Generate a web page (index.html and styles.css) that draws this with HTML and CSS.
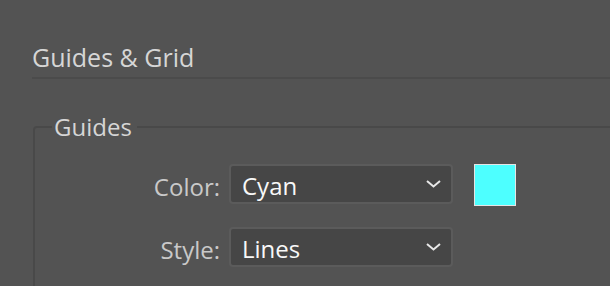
FILE: index.html
```html
<!DOCTYPE html>
<html lang="en">
<head>
  <meta charset="UTF-8" />
  <title>Preferences - Guides &amp; Grid</title>
  <link rel="stylesheet" href="styles.css">
</head>
<body>
  <div class="panel">
    <!-- Section header -->
    <h1 class="panel-title">Guides &amp; Grid</h1>

    <!-- Guides group -->
    <fieldset class="group">
      <legend>Guides</legend>
      <div class="form-grid">
        <label class="field-label">Color:</label>
        <div class="select">
          <span>Cyan</span>
          <svg class="chevron" width="15" height="8" viewBox="0 0 15 8"><path d="M1 1 L7.5 6.5 L14 1" fill="none" stroke="#e8e8e8" stroke-width="2"/></svg>
        </div>
        <div class="swatch"></div>

        <label class="field-label">Style:</label>
        <div class="select">
          <span>Lines</span>
          <svg class="chevron" width="15" height="8" viewBox="0 0 15 8"><path d="M1 1 L7.5 6.5 L14 1" fill="none" stroke="#e8e8e8" stroke-width="2"/></svg>
        </div>
      </div>
    </fieldset>
  </div>
</body>
</html>
```
FILE: styles.css
```css
* {
  box-sizing: border-box;
  margin: 0;
  padding: 0;
}
body {
  font-family: "Open Sans", "Noto Sans", sans-serif;
  background-color: #535353;
  color: #d4d4d4;
  overflow: hidden;
}
.panel {
  padding: 42px 0 0 32px;
  width: 640px;
}
.panel-title {
  font-size: 25px;
  font-weight: 500;
  line-height: 30px;
  padding-bottom: 5px;
  border-bottom: 2px solid #4b4b4b;
  color: #d6d6d6;
}
.group {
  margin: 33px 0 0 1px;
  border: 2px solid #494949;
  border-radius: 4px;
  padding: 0 0 20px 17px;
}
.group legend {
  font-size: 24px;
  font-weight: 500;
  line-height: 30px;
  padding: 0 5px 0 2px;
  color: #d6d6d6;
}
.form-grid {
  display: grid;
  grid-template-columns: 168px 224px 42px;
  column-gap: 9px;
  row-gap: 20px;
  align-items: start;
  padding-top: 22px;
}
.field-label {
  text-align: right;
  font-size: 24px;
  font-weight: 500;
  line-height: 40px;
  padding-top: 3px;
  color: #c9c9c9;
}
.select {
  height: 40px;
  background: #464646;
  border: 2px solid #5b5b5b;
  border-radius: 4px;
  display: flex;
  align-items: center;
  justify-content: space-between;
  padding: 3px 10px 0 11px;
  font-size: 24px;
  font-weight: 500;
  color: #f8f8f8;
}
.chevron {
  display: block;
  margin-top: -3px;
}
.swatch {
  width: 42px;
  height: 42px;
  margin-left: 12px;
  background: #4dffff;
  border: 1px solid #e4e4e4;
}
```
